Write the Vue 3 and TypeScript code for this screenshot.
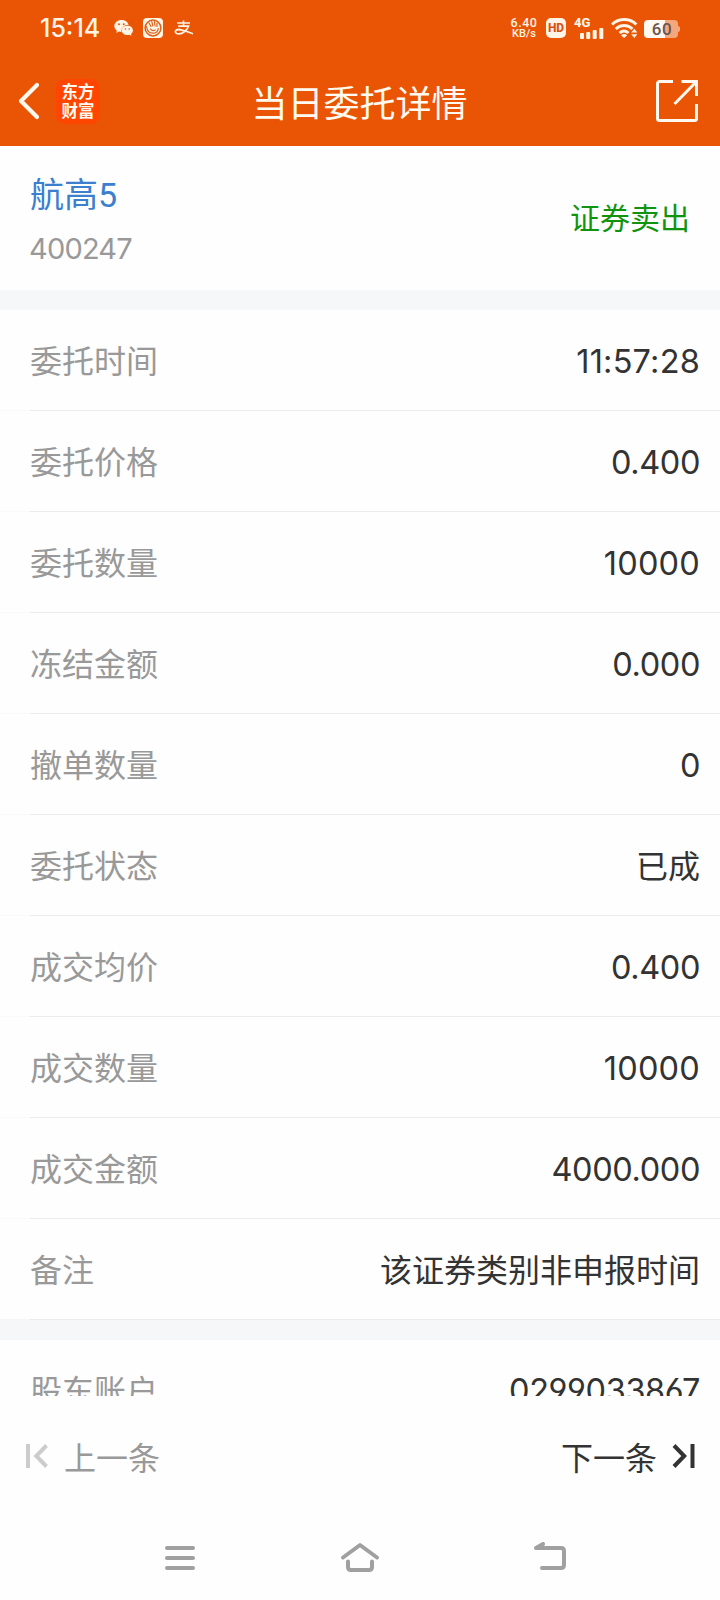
<script setup lang="ts">
interface Row {
  label: string
  value: string
}

const rows: Row[] = [
  { label: '委托时间', value: '11:57:28' },
  { label: '委托价格', value: '0.400' },
  { label: '委托数量', value: '10000' },
  { label: '冻结金额', value: '0.000' },
  { label: '撤单数量', value: '0' },
  { label: '委托状态', value: '已成' },
  { label: '成交均价', value: '0.400' },
  { label: '成交数量', value: '10000' },
  { label: '成交金额', value: '4000.000' },
  { label: '备注', value: '该证券类别非申报时间' },
]

const accountRows: Row[] = [{ label: '股东账户', value: '0299033867' }]

const isNumeric = (value: string): boolean => /^[\d.:]+$/.test(value)
const startsWithOne = (value: string): boolean => value.startsWith('1')
</script>

<template>
  <div class="screen">
    <header class="top">
      <div class="status">
        <span class="clock">15:14</span>
        <svg class="wechat" width="20" height="18" viewBox="0 0 20 18">
          <path fill="#fff4e6" d="M7.5 1C3.4 1 .3 3.7.3 7c0 1.900 1 3.500 2.600 4.600L2.300 14l2.600-1.400c.8.2 1.700.3 2.500.3C7 9 10 5.900 14.600 5.800 13.900 3 11 1 7.500 1z" />
          <path fill="#fff4e6" d="M13.300 6.800c-3.200 0-5.600 2-5.600 4.600s2.500 4.600 5.600 4.600c.8 0 1.400-.1 2-.3l2.200 1.100-.5-1.900c1.200-.9 1.900-2.100 1.900-3.500 0-2.600-2.400-4.600-5.600-4.600z" />
          <g fill="#e95504"><circle cx="5" cy="5.200" r="1" /><circle cx="9.700" cy="5.200" r="1" /><circle cx="11.400" cy="10" r=".8" /><circle cx="15.200" cy="10" r=".8" /></g>
        </svg>
        <svg class="hand" width="20" height="20" viewBox="0 0 20 20">
          <rect width="20" height="20" rx="4" fill="#fff4e6" />
          <circle cx="10" cy="10" r="7.900" fill="none" stroke="#d86018" stroke-width="1.500" />
          <path fill="none" stroke="#d86018" stroke-width="1.200" stroke-linecap="round" d="M6 5l2 3.500M8.800 3.600l1 4.200M11.500 3.600l.5 4.200M14 5v3.500M3.600 8.500c.4 4.600 3 6.700 6.200 6.700 3 0 5.100-1.800 5.500-4.700M7.500 11c1 1.500 3 2 4.700 1" />
        </svg>
        <svg class="alipay" width="20" height="16" viewBox="0 0 20 16">
          <path fill="none" stroke="#fff4e6" stroke-width="1.700" d="M3 3h13M9.500.5v5.200M4.200 6.200h10.300C13 10 9 14 4.600 13.900 1.500 13.800.8 11.600 2 10.400c3-2.700 9 1 17 3.300" />
        </svg>

        <div class="speed"><span class="rate">6.40</span><span class="unit">KB/s</span></div>
        <span class="hd">HD</span>
        <div class="signal">
          <span class="gen">4G</span>
          <svg width="24" height="12" viewBox="0 0 24 12" fill="#fff4e6">
            <rect x="0" y="6" width="4" height="6" rx="1" />
            <rect x="6.200" y="5" width="4" height="7" rx="1" />
            <rect x="12.700" y="3" width="4" height="9" rx="1" />
            <rect x="19.300" y="1" width="4" height="11" rx="1" />
          </svg>
        </div>
        <svg class="wifi" width="28" height="20" viewBox="0 0 28 20">
          <g fill="none" stroke="#fff4e6" stroke-width="3">
            <path d="M1 6.500C7.500-.2 19-.2 25.300 6.500" />
            <path d="M4.800 11c4.700-4.600 12-4.600 16.600 0" />
            <path d="M8.600 15c2.700-2.400 6.200-2.400 8.900 0" />
          </g>
          <path fill="#fff4e6" d="M10 17.200q3.100-2.200 6.200 0L13.100 20zM20.200 14.600l3.100-3.800 3.100 3.800zM20.200 16.200h6.200L23.300 20z" />
        </svg>
        <div class="battery"><span class="level">60</span></div>
      </div>

      <div class="nav">
        <svg class="back" width="22" height="38" viewBox="0 0 22 38">
          <path d="M19 3L3 19l16 16" fill="none" stroke="#fff9f0" stroke-width="4.200" stroke-linecap="round" stroke-linejoin="round" />
        </svg>
        <div class="logo"><span>东方</span><span>财富</span></div>
        <h1>当日委托详情</h1>
        <svg class="share" width="42" height="42" viewBox="0 0 42 42">
          <path d="M17 1.500H3.500a2 2 0 0 0-2 2v35a2 2 0 0 0 2 2h35a2 2 0 0 0 2-2V24M25.500 1.500h15V16M40 2L18.500 24" fill="none" stroke="#fff9f0" stroke-width="3" />
        </svg>
      </div>
    </header>

    <section class="stock">
      <div>
        <div class="name">航高5</div>
        <div class="code">400247</div>
      </div>
      <div class="side">证券卖出</div>
    </section>

    <main class="details">
      <div class="group">
        <div v-for="row in rows" :key="row.label" class="row">
          <span class="label">{{ row.label }}</span>
          <span class="value" :class="{ num: isNumeric(row.value), spaced: startsWithOne(row.value) }">{{ row.value }}</span>
        </div>
      </div>
      <div class="group">
        <div v-for="row in accountRows" :key="row.label" class="row">
          <span class="label">{{ row.label }}</span>
          <span class="value num account">{{ row.value }}</span>
        </div>
      </div>
    </main>

    <footer class="pager">
      <div class="prev">
        <svg width="23" height="24" viewBox="0 0 23 24" fill="none" stroke="#ccc" stroke-width="4">
          <path d="M2 0v24M20.500 1.500L10.300 12l10.200 10.500" />
        </svg>
        <span>上一条</span>
      </div>
      <div class="next">
        <span>下一条</span>
        <svg width="23" height="24" viewBox="0 0 23 24" fill="none" stroke="#333" stroke-width="4">
          <path d="M20.500 0v24M2 1.500L12.200 12 2 22.500" />
        </svg>
      </div>
    </footer>

    <nav class="system">
      <svg width="40" height="32" viewBox="0 0 40 32"><path d="M7 6h26M7 16h26M7 26h26" /></svg>
      <svg width="40" height="32" viewBox="0 0 40 32"><path d="M3 15.500L20 3l17 12.500M8 19.500V25q0 3 3 3h18q3 0 3-3v-5.500" /></svg>
      <svg width="40" height="32" viewBox="0 0 40 32"><path d="M13 2L6 6h25q3 0 3 3v14q0 3-3 3H12" /></svg>
    </nav>
  </div>
</template>

<style>
body {
  margin: 0;
  background: #fefefe;
}
</style>

<style scoped>
.screen {
  width: 720px;
  height: 1600px;
  display: flex;
  flex-direction: column;
  overflow: hidden;
  background: #fefefe;
  color: #333;
  font-family: Roboto, "Noto Sans CJK SC", sans-serif;
}
.top {
  height: 146px;
  flex: none;
  background: #e95504;
  color: #fff9f0;
}
.status {
  display: flex;
  align-items: center;
  height: 56px;
  padding-left: 40px;
  color: #fff4e6;
}
.clock {
  width: 74px;
  font-family: Inter, sans-serif;
  font-size: 25px;
  font-weight: 500;
  line-height: 56px;
}
.hand {
  margin-left: 9px;
}
.alipay {
  margin-left: 11px;
}
.speed {
  width: 28px;
  margin-left: 316px;
  display: flex;
  flex-direction: column;
  align-items: center;
  font-weight: 500;
}
.rate {
  font-size: 12.5px;
  line-height: 10px;
  letter-spacing: 0.5px;
}
.unit {
  font-size: 11px;
  line-height: 11px;
}
.hd {
  width: 20px;
  height: 20px;
  margin-left: 8px;
  border-radius: 5px;
  background: #fff4e6;
  color: #d85010;
  font-size: 12px;
  font-weight: 800;
  line-height: 21px;
  text-align: center;
}
.signal {
  width: 30px;
  height: 21px;
  margin-left: 8px;
  display: flex;
  flex-direction: column;
}
.gen {
  font-size: 13px;
  font-weight: 800;
  line-height: 10px;
  height: 9px;
}
.signal svg {
  flex: none;
  margin-left: 6px;
}
.wifi {
  margin-left: 7px;
}
.battery {
  position: relative;
  width: 34px;
  height: 18px;
  margin-left: 5px;
  margin-top: 2px;
  border-radius: 4px;
  background: linear-gradient(90deg, #fff9f2 21px, #f4a77d 21px);
}
.battery::after {
  content: "";
  position: absolute;
  left: 34px;
  top: 6px;
  width: 2px;
  height: 6px;
  border-radius: 0 2px 2px 0;
  background: #f4a77d;
}
.level {
  display: block;
  color: #65564f;
  font-size: 17px;
  font-weight: 500;
  line-height: 19px;
  text-align: center;
  letter-spacing: 0.5px;
  padding-left: 2px;
}
.nav {
  display: flex;
  align-items: center;
  height: 90px;
  padding: 0 22px 0 18px;
}
.logo {
  width: 44px;
  height: 45px;
  margin-left: 16px;
  border-radius: 9px;
  background: #ff4600;
  display: flex;
  flex-direction: column;
  align-items: center;
  justify-content: center;
  font-family: "Noto Sans CJK SC", sans-serif;
  font-size: 16.5px;
  font-weight: 700;
  line-height: 19px;
}
h1 {
  flex: 1;
  margin: 7px 0 0 -37px;
  text-align: center;
  font-size: 36px;
  font-weight: 400;
  line-height: 50px;
}
.stock {
  height: 144px;
  box-sizing: border-box;
  flex: none;
  display: flex;
  justify-content: space-between;
  padding: 24px 30px 0;
}
.name {
  font-size: 34px;
  line-height: 50px;
  color: #3c7fcf;
}
.code {
  margin-top: 9px;
  font-family: Inter, sans-serif;
  font-size: 29px;
  line-height: 40px;
  letter-spacing: -0.8px;
  margin-left: -1px;
  color: #999;
}
.side {
  margin-top: 26px;
  font-size: 30px;
  line-height: 46px;
  color: #109410;
}
.details {
  height: 1106px;
  flex: none;
  overflow: hidden;
}
.group {
  border-top: 20px solid #f6f7f9;
}
.row {
  height: 101px;
  box-sizing: border-box;
  display: flex;
  align-items: center;
  justify-content: space-between;
  padding: 2px 20px 0 30px;
  background: linear-gradient(90deg, #f9f9f9 30px, #ebebeb 30px) bottom / 100% 1px no-repeat;
}
.row:last-child {
  background: linear-gradient(90deg, #f6f7f9 30px, #ebebeb 30px) bottom / 100% 1px no-repeat;
}
.label {
  font-size: 32px;
  line-height: 48px;
  color: #999;
}
.value {
  font-size: 32px;
  line-height: 48px;
}
.value.num {
  font-family: Inter, sans-serif;
  font-size: 32.5px;
  letter-spacing: -0.4px;
  padding-top: 1px;
}
.value.num.spaced {
  letter-spacing: 0.2px;
}
.value.num.account {
  letter-spacing: -0.4px;
  padding: 0 0 2px;
  font-feature-settings: "cv03", "cv04";
}
.pager {
  height: 122px;
  box-sizing: border-box;
  flex: none;
  display: flex;
  justify-content: space-between;
  padding: 0 25px 0 26px;
  font-size: 32px;
}
.prev,
.next {
  display: flex;
  align-items: center;
}
.prev span,
.next span {
  padding-bottom: 3px;
}
.prev {
  gap: 15px;
  color: #999;
}
.next {
  gap: 15px;
}
.prev svg,
.next svg {
  position: relative;
  top: -1px;
}
.system {
  display: grid;
  grid-template-columns: 180px 190px 40px;
  padding: 24px 0 0 160px;
}
.system svg {
  fill: none;
  stroke: #a0a0a0;
  stroke-width: 4;
  stroke-linecap: round;
  stroke-linejoin: round;
}
</style>
